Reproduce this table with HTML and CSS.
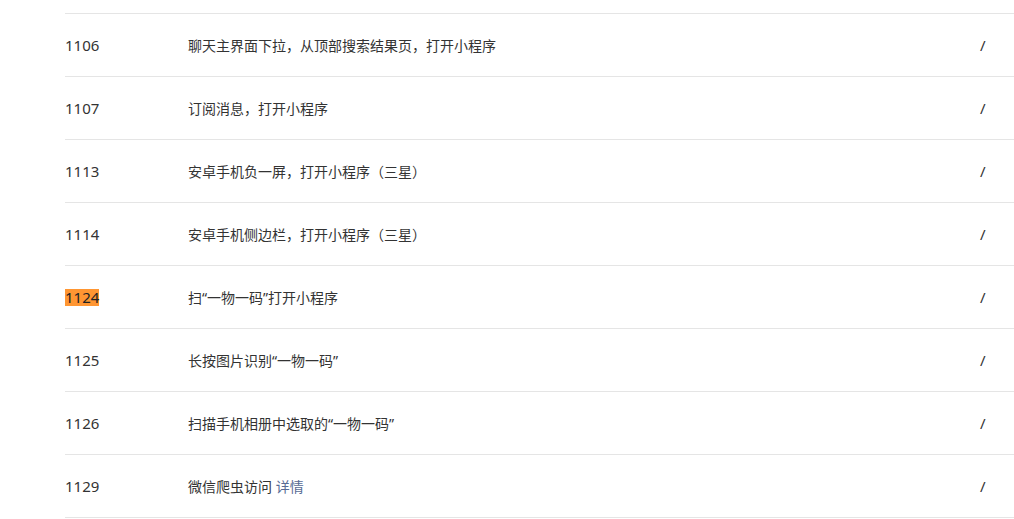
FILE: index.html
```html
<!DOCTYPE html>
<html lang="zh-CN">
<head>
    <meta charset="UTF-8" />
    <meta name="viewport" content="width=device-width, initial-scale=1.0" />
    <title>场景值列表</title>
    <link rel="stylesheet" href="styles.css">
</head>
<body>
    <div class="scene-list">
        <div class="scene-row">
            <span class="scene-id">1106</span>
            <span class="scene-desc">聊天主界面下拉，从顶部搜索结果页，打开小程序</span>
            <span class="scene-path">/</span>
        </div>
        <div class="scene-row">
            <span class="scene-id">1107</span>
            <span class="scene-desc">订阅消息，打开小程序</span>
            <span class="scene-path">/</span>
        </div>
        <div class="scene-row">
            <span class="scene-id">1113</span>
            <span class="scene-desc">安卓手机负一屏，打开小程序（三星）</span>
            <span class="scene-path">/</span>
        </div>
        <div class="scene-row">
            <span class="scene-id">1114</span>
            <span class="scene-desc">安卓手机侧边栏，打开小程序（三星）</span>
            <span class="scene-path">/</span>
        </div>
        <div class="scene-row">
            <span class="scene-id"><mark class="hit">1124</mark></span>
            <span class="scene-desc">扫“一物一码”打开小程序</span>
            <span class="scene-path">/</span>
        </div>
        <div class="scene-row">
            <span class="scene-id">1125</span>
            <span class="scene-desc">长按图片识别“一物一码”</span>
            <span class="scene-path">/</span>
        </div>
        <div class="scene-row">
            <span class="scene-id">1126</span>
            <span class="scene-desc">扫描手机相册中选取的“一物一码”</span>
            <span class="scene-path">/</span>
        </div>
        <div class="scene-row">
            <span class="scene-id">1129</span>
            <span class="scene-desc">微信爬虫访问 <a href="#" class="detail-link">详情</a></span>
            <span class="scene-path">/</span>
        </div>
    </div>
</body>
</html>
```

FILE: styles.css
```css
body {
    margin: 0;
    background-color: #ffffff;
    font-family: "Noto Sans", "Noto Sans CJK SC", sans-serif;
    font-size: 14px;
    color: #333;
    overflow: hidden;
}
.scene-list {
    margin-top: 13px;
    margin-left: 65px;
}
.scene-row {
    display: grid;
    grid-template-columns: 123px 1fr 34px;
    align-items: center;
    height: 61px;
    padding-bottom: 1px;
    border-top: 1px solid #e5e5e5;
}
.scene-row:last-child {
    border-bottom: 1px solid #e5e5e5;
}
.scene-id {
    font-size: 15px;
}
.scene-path {
    font-size: 15px;
}
.hit {
    background-color: #ff9632;
    color: #222;
    line-height: 17px;
    display: inline-block;
}
.detail-link {
    color: #576b95;
    text-decoration: none;
}
```
